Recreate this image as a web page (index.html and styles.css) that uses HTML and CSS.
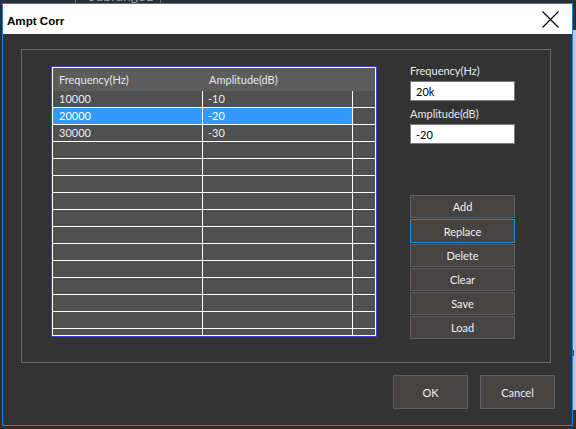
FILE: index.html
```html
<!DOCTYPE html>
<html lang="en">
<head>
  <meta charset="UTF-8">
  <title>Ampt Corr</title>
  <link rel="stylesheet" href="styles.css">
</head>
<body>
  <div class="behind">
    <span class="tab">Subrange1</span>
  </div>
  <div class="desk">
    <div class="dialog">
      <div class="titlebar">
        <span class="title">Ampt Corr</span>
        <svg class="close" width="17" height="17" viewBox="0 0 17 17">
          <path d="M0.5 0.5 L16.5 16.5 M16.5 0.5 L0.5 16.5" stroke="#000" stroke-width="1.1" fill="none"/>
        </svg>
      </div>
      <div class="content">
        <div class="group">
          <div class="grid">
            <div class="cells">
              <div class="hd">Frequency(Hz)</div><div class="hd">Amplitude(dB)</div><div class="hd"></div>
              <div class="cell">10000</div><div class="cell">-10</div><div class="cell"></div>
              <div class="cell sel f1">20000</div><div class="cell sel f2">-20</div><div class="cell"></div>
              <div class="cell">30000</div><div class="cell">-30</div><div class="cell"></div>
              <div class="cell"></div><div class="cell"></div><div class="cell"></div>
              <div class="cell"></div><div class="cell"></div><div class="cell"></div>
              <div class="cell"></div><div class="cell"></div><div class="cell"></div>
              <div class="cell"></div><div class="cell"></div><div class="cell"></div>
              <div class="cell"></div><div class="cell"></div><div class="cell"></div>
              <div class="cell"></div><div class="cell"></div><div class="cell"></div>
              <div class="cell"></div><div class="cell"></div><div class="cell"></div>
              <div class="cell"></div><div class="cell"></div><div class="cell"></div>
              <div class="cell"></div><div class="cell"></div><div class="cell"></div>
              <div class="cell"></div><div class="cell"></div><div class="cell"></div>
              <div class="cell"></div><div class="cell"></div><div class="cell"></div>
              <div class="cell"></div><div class="cell"></div><div class="cell"></div>
            </div>
          </div>
          <div class="side">
            <label class="lbl">Frequency(Hz)</label>
            <input class="field" type="text" value="20k">
            <label class="lbl lbl2">Amplitude(dB)</label>
            <input class="field" type="text" value="-20">
            <div class="actions">
              <button class="btn">Add</button>
              <button class="btn focus">Replace</button>
              <button class="btn">Delete</button>
              <button class="btn">Clear</button>
              <button class="btn">Save</button>
              <button class="btn">Load</button>
            </div>
          </div>
        </div>
        <div class="footer">
          <button class="btn big">OK</button>
          <button class="btn big">Cancel</button>
        </div>
      </div>
    </div>
    <div class="sliver">
      <i class="mark"></i>
    </div>
  </div>
</body>
</html>
```

FILE: styles.css
```css
body {
  margin: 0;
  background: #2e2e2e;
  font-family: Lato, "Liberation Sans", sans-serif;
  font-size: 11px;
  overflow: hidden;
}

.behind {
  height: 3px;
  overflow: hidden;
  padding-left: 75px;
}

.behind .tab {
  display: inline-block;
  width: 72px;
  padding-left: 12px;
  border-left: 1px solid #6a6a6a;
  border-right: 1px solid #6a6a6a;
  color: #9a9a9a;
  font-size: 14px;
  line-height: 14px;
  margin-top: -11px;
  vertical-align: top;
}

.desk {
  display: flex;
  align-items: flex-start;
}

.dialog {
  width: 569px;
  height: 421px;
  margin-left: 2px;
  border: 1px solid #1a7ff0;
  background: #333333;
  display: flex;
  flex-direction: column;
}

.titlebar {
  height: 30px;
  background: #fff;
  display: flex;
  align-items: center;
  justify-content: space-between;
  padding: 0 13px 0 4px;
}

.titlebar .title {
  font-family: "Liberation Sans", sans-serif;
  font-weight: bold;
  font-size: 11.6px;
  color: #000;
  margin-top: 2px;
}

.titlebar .close {
  margin-top: 1px;
}

.content {
  padding: 15px 17px 0 18px;
}

.group {
  border: 1px solid #6a6a6a;
  display: flex;
  padding: 16px 0 0 29px;
  box-sizing: border-box;
  height: 314px;
  width: 530px;
}

.grid {
  width: 324px;
  height: 269px;
  border: 1px solid #4040d8;
  flex: none;
}

.grid .cells {
  height: 267px;
  border: 1px solid #fff;
  overflow: hidden;
  display: grid;
  grid-template-columns: 150px 150px 22px;
  grid-auto-rows: min-content;
  background: #505050;
  color: #ececec;
}

.grid .hd {
  height: 23px;
  line-height: 23px;
  padding-left: 6px;
  background: #5c5c5c;
  color: #e8e8e8;
}

.grid .cell {
  height: 16px;
  line-height: 16px;
  padding-left: 6px;
  border-bottom: 1px solid #fff;
  border-right: 1px solid #fff;
}

.grid .cell:nth-child(3n+2) {
  padding-left: 5px;
}

.grid .cell:nth-child(3n) {
  border-right: none;
  padding: 0;
}

.grid .cell.sel {
  background: #3399ff;
  color: #fff;
  position: relative;
}

.grid .cell.sel::after {
  content: "";
  position: absolute;
  top: 0;
  bottom: 0;
  left: 0;
  right: 0;
  border-top: 1px dotted #e0701c;
  border-bottom: 1px dotted #e0701c;
}

.grid .cell.f1::after {
  border-left: 1px dotted #e0701c;
}

.grid .cell.f2::after {
  border-right: 1px dotted #e0701c;
}

.side {
  margin-left: 33px;
  width: 105px;
  display: flex;
  flex-direction: column;
  margin-top: -3px;
}

.lbl {
  color: #e8e8e8;
  line-height: 16px;
  height: 16px;
  margin-bottom: 2px;
}

.lbl2 {
  margin-top: 5px;
}

.field {
  height: 20px;
  width: 105px;
  box-sizing: border-box;
  border: 1px solid #7a7a7a;
  background: #fff;
  padding: 0 5px;
  font-family: inherit;
  font-size: 11px;
  color: #000;
  outline: none;
}

.actions {
  margin-top: 51px;
  display: flex;
  flex-direction: column;
  gap: 1px;
}

.btn {
  height: 23px;
  width: 105px;
  background: #474342;
  border: 1px solid #5f5f5f;
  color: #f0f0f0;
  font-family: inherit;
  font-size: 11px;
  padding: 0;
}

.btn.focus {
  height: 24px;
  border-color: #1a8ee0;
}

.footer {
  display: flex;
  justify-content: flex-end;
  gap: 12px;
  margin-top: 12px;
}

.btn.big {
  width: 75px;
  height: 34px;
}

.sliver {
  width: 3px;
  height: 380px;
  margin-top: 27px;
  background: #c4c4c4;
}

.sliver .mark {
  display: block;
  height: 6px;
  margin-top: 320px;
  border-left: 1px solid #2040e0;
}
```
